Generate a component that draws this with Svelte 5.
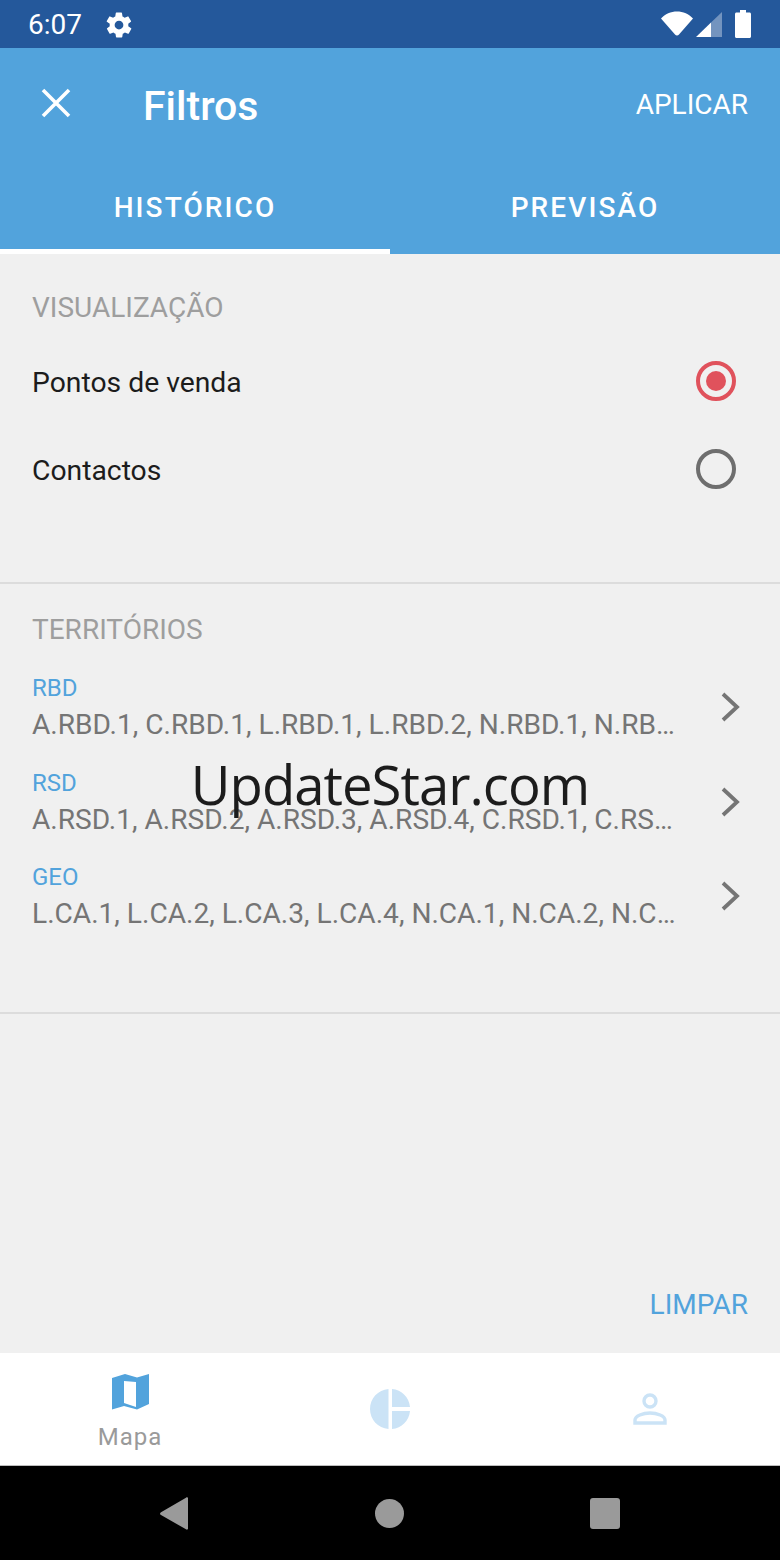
<script>
  const territories = [
    { label: "RBD", values: "A.RBD.1, C.RBD.1, L.RBD.1, L.RBD.2, N.RBD.1, N.RBD.2, N.RBD.3, S.RBD.1" },
    { label: "RSD", values: "A.RSD.1, A.RSD.2, A.RSD.3, A.RSD.4, C.RSD.1, C.RSD.2, C.RSD.3, L.RSD.1" },
    { label: "GEO", values: "L.CA.1, L.CA.2, L.CA.3, L.CA.4, N.CA.1, N.CA.2, N.CA.3, N.CA.4, S.CA.1" }
  ];

  let visualizacao = "pontos";
</script>

<div class="screen">
  <div class="status-bar">
    <span class="time">6:07</span>
    <svg class="gear" viewBox="0 0 24 24" width="30" height="30">
      <path fill="#fff" d="M19.4 13a7.5 7.5 0 0 0 0-2l2.1-1.6a.5.5 0 0 0 .1-.6l-2-3.5a.5.5 0 0 0-.6-.2l-2.5 1a7.3 7.3 0 0 0-1.7-1l-.4-2.6a.5.5 0 0 0-.5-.4h-4a.5.5 0 0 0-.5.4l-.4 2.6a7.6 7.6 0 0 0-1.7 1l-2.5-1a.5.5 0 0 0-.6.2l-2 3.5a.5.5 0 0 0 .1.6L4.600 11a7.9 7.9 0 0 0 0 2l-2.1 1.6a.5.5 0 0 0-.1.6l2 3.5c.1.2.4.3.6.2l2.5-1c.5.4 1.1.7 1.7 1l.4 2.6c0 .2.2.4.5.4h4c.2 0 .5-.2.5-.4l.4-2.6a7.6 7.6 0 0 0 1.7-1l2.5 1c.2.1.5 0 .6-.2l2-3.5a.5.5 0 0 0-.1-.6zM12 15.500a3.500 3.500 0 1 1 0-7 3.500 3.500 0 0 1 0 7z" />
    </svg>
    <span class="spacer"></span>
    <svg viewBox="0 0 32 26" width="32" height="26" class="wifi">
      <path fill="#fff" d="M0 7.500C4 3 10 .5 16 .5s12 2.500 16 7L18 23.500c-1 1.300-3 1.300-4 0z" />
    </svg>
    <svg viewBox="0 0 26 26" width="26" height="26" class="signal">
      <path fill="#fff" fill-opacity="0.36" d="M15 10.500L26 0v25H15z" />
      <path fill="#fff" d="M15 10.500V25H0z" />
    </svg>
    <svg viewBox="0 0 16 28" width="16" height="28" class="battery">
      <path fill="#fff" d="M5 0h6v2.500h3.500c.8 0 1.500.7 1.500 1.500v22.500c0 .8-.7 1.500-1.500 1.500h-13C.7 28 0 27.300 0 26.500V4c0-.8.7-1.500 1.500-1.500H5z" />
    </svg>
  </div>

  <header class="app-bar">
    <div class="toolbar">
      <svg class="close" viewBox="0 0 30 30" width="30" height="30">
        <path d="M2 2l26 26M28 2L2 28" stroke="#fff" stroke-width="3.600" fill="none" />
      </svg>
      <h1>Filtros</h1>
      <span class="apply">APLICAR</span>
    </div>
    <div class="tabs">
      <div class="tab active">HISTÓRICO</div>
      <div class="tab">PREVISÃO</div>
    </div>
  </header>

  <main class="content">
    <section class="visual">
      <h2>VISUALIZAÇÃO</h2>
      <button class="radio-row" onclick={() => (visualizacao = "pontos")}>
        <span>Pontos de venda</span>
        <span class="radio" class:on={visualizacao === "pontos"}></span>
      </button>
      <button class="radio-row" onclick={() => (visualizacao = "contactos")}>
        <span>Contactos</span>
        <span class="radio" class:on={visualizacao === "contactos"}></span>
      </button>
    </section>

    <section class="territories">
      <h2>TERRITÓRIOS</h2>
      {#each territories as t}
        <div class="territory">
          <div class="territory-text">
            <div class="t-label">{t.label}</div>
            <div class="t-values">{t.values}</div>
          </div>
          <svg class="chevron" viewBox="0 0 20 30" width="20" height="30">
            <path d="M2 2l14 13L2 28" stroke="#757575" stroke-width="3.800" fill="none" />
          </svg>
        </div>
      {/each}
    </section>

    <div class="clear-row"><span>LIMPAR</span></div>
  </main>

  <nav class="bottom-nav">
    <div class="nav-item labelled">
      <svg viewBox="0 0 37 36" width="37" height="36">
        <path fill="#52a3dc" fill-rule="evenodd" d="M0 4L13 0l12 3.500L37 0v30l-12 5.500L12 32 0 35.500zM12 7v22l12 4V8z" />
      </svg>
      <span>Mapa</span>
    </div>
    <div class="nav-item">
      <svg viewBox="0 0 40 40" width="40" height="40">
        <path fill="#cbe3f6" d="M18.500 0v40C8 39.200 0 30.500 0 20S8 .8 18.500 0zM22 0c9.700.8 17.200 8.300 18 18H22zM22 22h18c-.8 9.700-8.300 17.200-18 18z" />
      </svg>
    </div>
    <div class="nav-item">
      <svg viewBox="0 0 34 32" width="34" height="32">
        <circle cx="17" cy="8" r="6" fill="none" stroke="#cbe3f6" stroke-width="3.400" />
        <path fill="none" stroke="#cbe3f6" stroke-width="3.400" d="M2 30v-3c0-4 8-7 15-7s15 3 15 7v3z" />
      </svg>
    </div>
  </nav>

  <div class="system-nav">
    <svg viewBox="0 0 28 33" width="28" height="33">
      <path fill="#9a9a9a" d="M28 1.500v30c0 1-1 1.500-2 .8L1 18c-1.300-.8-1.300-1.800 0-2.800L26 .7c1-.7 2-.2 2 .8z" />
    </svg>
    <span class="home"></span>
    <span class="recent"></span>
  </div>

  <div class="watermark">UpdateStar.com</div>
</div>

<style>
  :global(body) {
    margin: 0;
  }

  .screen {
    position: relative;
    width: 780px;
    height: 1560px;
    display: flex;
    flex-direction: column;
    overflow: hidden;
    background: #f0f0f0;
    font-family: Roboto, "Liberation Sans", sans-serif;
  }

  /* Status bar */
  .status-bar {
    height: 48px;
    flex: none;
    display: flex;
    align-items: center;
    padding: 0 29px 0 28px;
    background: #24589b;
    color: #fff;
    box-sizing: border-box;
  }

  .time {
    font-size: 28px;
    line-height: 48px;
    padding-top: 2px;
  }

  .gear {
    margin-left: 22px;
    margin-top: 1px;
  }

  .spacer {
    flex: 1;
  }

  .wifi {
    margin-right: 3px;
  }

  .signal {
    margin-right: 13px;
    margin-top: 1px;
  }

  /* App bar */
  .app-bar {
    height: 206px;
    flex: none;
    display: flex;
    flex-direction: column;
    background: #52a3dc;
    color: #fff;
  }

  .toolbar {
    height: 115px;
    display: flex;
    align-items: center;
    padding: 0 32px 0 41px;
  }

  .close {
    margin-right: 72px;
    margin-top: -5px;
  }

  h1 {
    margin: 0;
    flex: 1;
    font-size: 41px;
    font-weight: 500;
  }

  .apply {
    font-size: 28px;
    margin-top: -3px;
  }

  .tabs {
    flex: 1;
    display: flex;
  }

  .tab {
    flex: 1;
    box-sizing: border-box;
    text-align: center;
    padding-top: 28px;
    font-size: 28px;
    font-weight: 500;
    letter-spacing: 2.1px;
    line-height: 34px;
    border-bottom: 5px solid transparent;
  }

  .tab.active {
    border-bottom-color: #fff;
  }

  /* Content */
  .content {
    flex: 1;
    display: flex;
    flex-direction: column;
  }

  section {
    padding: 0 40px 0 32px;
    border-bottom: 2px solid #dcdcdc;
    box-sizing: border-box;
  }

  h2 {
    margin: 0;
    font-size: 28px;
    font-weight: 400;
    line-height: 34px;
    color: #9e9e9e;
  }

  .visual {
    height: 330px;
    padding-top: 37px;
  }

  .radio-row {
    display: flex;
    align-items: center;
    justify-content: space-between;
    width: 100%;
    height: 88px;
    padding: 0;
    border: none;
    background: none;
    font: inherit;
    font-size: 28.3px;
    color: #1c1c1c;
    cursor: pointer;
  }

  .radio-row:first-of-type {
    margin-top: 13px;
  }

  .radio {
    width: 40px;
    height: 40px;
    margin: -2px 4px 0 0;
    box-sizing: border-box;
    border: 4px solid #6e6e6e;
    border-radius: 50%;
    display: flex;
    align-items: center;
    justify-content: center;
  }

  .radio.on {
    border-color: #e0525c;
  }

  .radio.on::after {
    content: "";
    width: 20px;
    height: 20px;
    border-radius: 50%;
    background: #e0525c;
  }

  .territories {
    height: 430px;
    padding-top: 29px;
  }

  .territory {
    display: flex;
    align-items: center;
    justify-content: space-between;
    height: 94.5px;
  }

  .territory:first-of-type {
    margin-top: 13px;
  }

  .territory-text {
    width: 647px;
  }

  .t-label {
    font-size: 24px;
    line-height: 35px;
    color: #52a3dc;
  }

  .t-values {
    font-size: 28.1px;
    line-height: 37px;
    color: #757575;
    white-space: nowrap;
    overflow: hidden;
    text-overflow: ellipsis;
  }

  .chevron {
    margin-right: -1px;
  }

  .clear-row {
    flex: 1;
    display: flex;
    align-items: flex-end;
    justify-content: flex-end;
    padding: 0 32px 31px 0;
    font-size: 28px;
    line-height: 34px;
    color: #52a3dc;
  }

  /* Bottom navigation */
  .bottom-nav {
    height: 113px;
    flex: none;
    display: flex;
    box-sizing: border-box;
    background: #fff;
    border-bottom: 1px solid #bdbdbd;
  }

  .nav-item {
    flex: 1;
    display: flex;
    flex-direction: column;
    align-items: center;
    justify-content: center;
  }

  .nav-item.labelled {
    padding-top: 8px;
  }

  .nav-item span {
    margin-top: 12px;
    font-size: 24px;
    line-height: 30px;
    letter-spacing: 1px;
    color: #9a9a9a;
  }

  .system-nav {
    height: 94px;
    flex: none;
    display: flex;
    align-items: center;
    padding: 0 160px;
    justify-content: space-between;
    background: #000;
  }

  .home {
    width: 29px;
    height: 29px;
    border-radius: 50%;
    background: #9a9a9a;
  }

  .recent {
    width: 30px;
    height: 31px;
    border-radius: 3px;
    background: #9a9a9a;
  }

  /* Watermark sits over the list */
  .watermark {
    position: absolute;
    top: 746px;
    left: 0;
    right: 0;
    text-align: center;
    font-family: "Open Sans", sans-serif;
    font-size: 54.5px;
    letter-spacing: -1px;
    line-height: 76px;
    color: #1c1c1c;
  }
</style>
